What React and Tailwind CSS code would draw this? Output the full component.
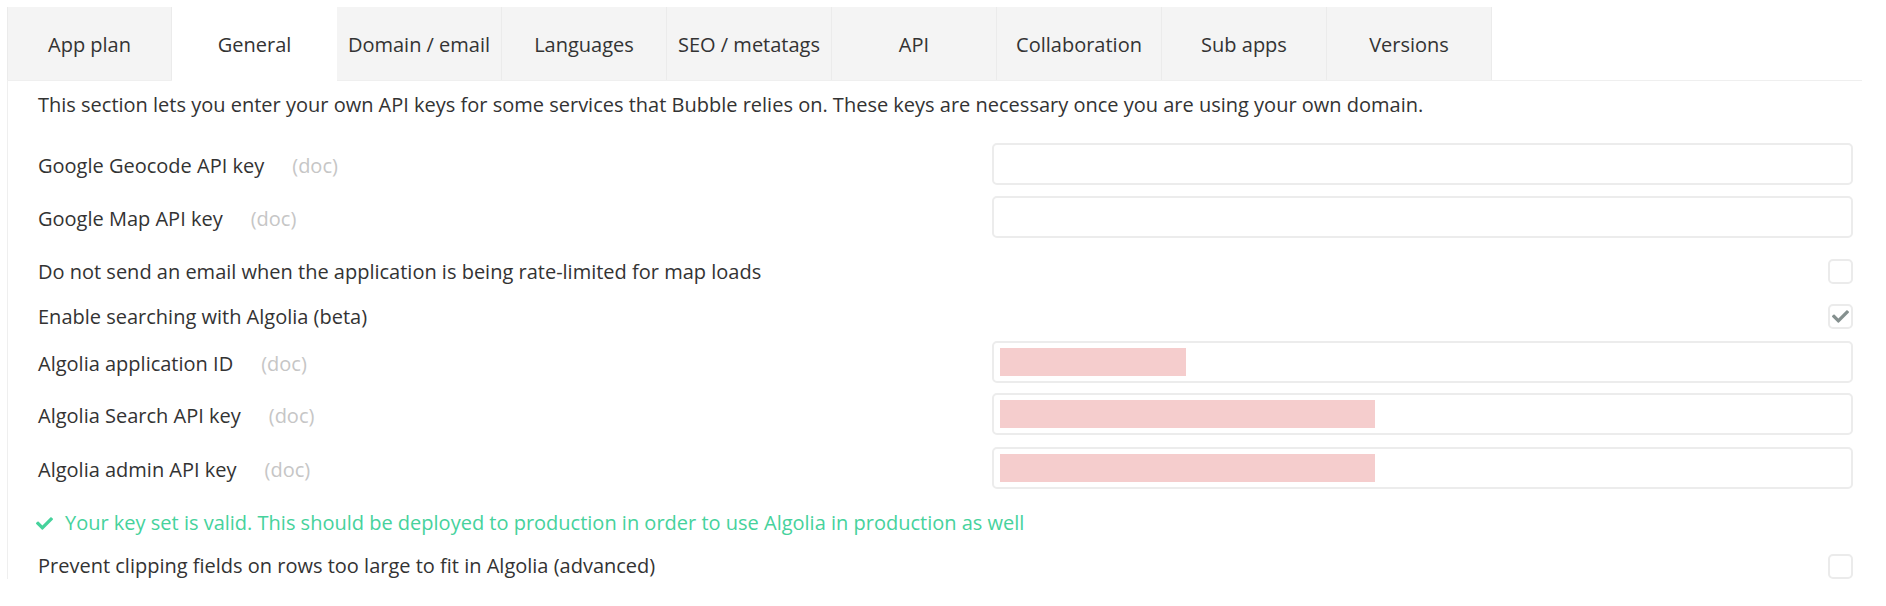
import { FaCheck } from 'react-icons/fa';

const TABS = ['App plan', 'General', 'Domain / email', 'Languages', 'SEO / metatags', 'API', 'Collaboration', 'Sub apps', 'Versions'];

function Doc({ gap }) {
    return <span className={`text-[#c6c6c6] ${gap}`}>(doc)</span>;
}

function KeyRow({ label, gap, className, redact }) {
    return (
        <div className={`flex items-center justify-between h-[42px] ${className}`}>
            <div className="flex items-center pt-[3px]">
                <span>{label}</span>
                <Doc gap={gap} />
            </div>
            <div className="w-[861px] h-[42px] rounded-[5px] border-2 border-[#ececec] bg-white flex items-center pl-[6px]">
                {redact && <div className="h-[28px] bg-[#f5cdcd]" style={{ width: redact }} />}
            </div>
        </div>
    );
}

function CheckRow({ label, checked, className }) {
    return (
        <div className={`flex items-center justify-between ${className}`}>
            <span>{label}</span>
            <div className="w-[25px] h-[25px] rounded-[5px] border-2 border-[#ebebeb] flex items-center justify-center">
                {checked && <FaCheck className="text-[#85908f] w-[17px] h-[17px]" />}
            </div>
        </div>
    );
}

export default function App() {
    return (
        <div className="w-full h-[606px] bg-white text-[#333] text-[20px] overflow-hidden" style={{ fontFamily: '"Open Sans", "Noto Sans", sans-serif' }}>
            <div className="pl-[7px] pt-[7px]">
                {/* Tabs */}
                <div className="flex items-start h-[73px]">
                    {TABS.map((t) => (
                        <div
                            key={t}
                            className={
                                t === 'General'
                                    ? 'w-[165px] h-[74px] pt-[2px] relative z-10 bg-white flex items-center justify-center'
                                    : 'w-[165px] h-[73px] pt-[2px] bg-[#f4f4f4] border-r border-[#ebebeb] first:border-l flex items-center justify-center'
                            }
                        >
                            {t}
                        </div>
                    ))}
                </div>

                {/* Content */}
                <div className="w-[1855px] border-t border-l border-[#efefef] pl-[30px] pr-[9px] pt-[12px]">
                    <div className="h-[24px] flex items-center whitespace-nowrap">
                        This section lets you enter your own API keys for some services that Bubble relies on. These keys are necessary once you are using your own domain.
                    </div>

                    <KeyRow label="Google Geocode API key" gap="ml-[28px]" className="mt-[26px]" />
                    <KeyRow label="Google Map API key" gap="ml-[28px]" className="mt-[11px]" />

                    <CheckRow label="Do not send an email when the application is being rate-limited for map loads" className="mt-[21px] h-[25px]" />
                    <CheckRow label="Enable searching with Algolia (beta)" checked className="mt-[20px] h-[25px]" />

                    <KeyRow label="Algolia application ID" gap="ml-[28px]" className="mt-[12px]" redact={186} />
                    <KeyRow label="Algolia Search API key" gap="ml-[28px]" className="mt-[10px]" redact={375} />
                    <KeyRow label="Algolia admin API key" gap="ml-[28px]" className="mt-[12px]" redact={375} />

                    <div className="mt-[22px] h-[24px] flex items-center text-[#46d29c] whitespace-nowrap">
                        <FaCheck className="w-[17px] h-[17px] ml-[-2px] mr-[12px]" />
                        <span>Your key set is valid. This should be deployed to production in order to use Algolia in production as well</span>
                    </div>

                    <CheckRow label="Prevent clipping fields on rows too large to fit in Algolia (advanced)" className="mt-[18px] h-[26px]" />
                </div>
            </div>
        </div>
    );
}
